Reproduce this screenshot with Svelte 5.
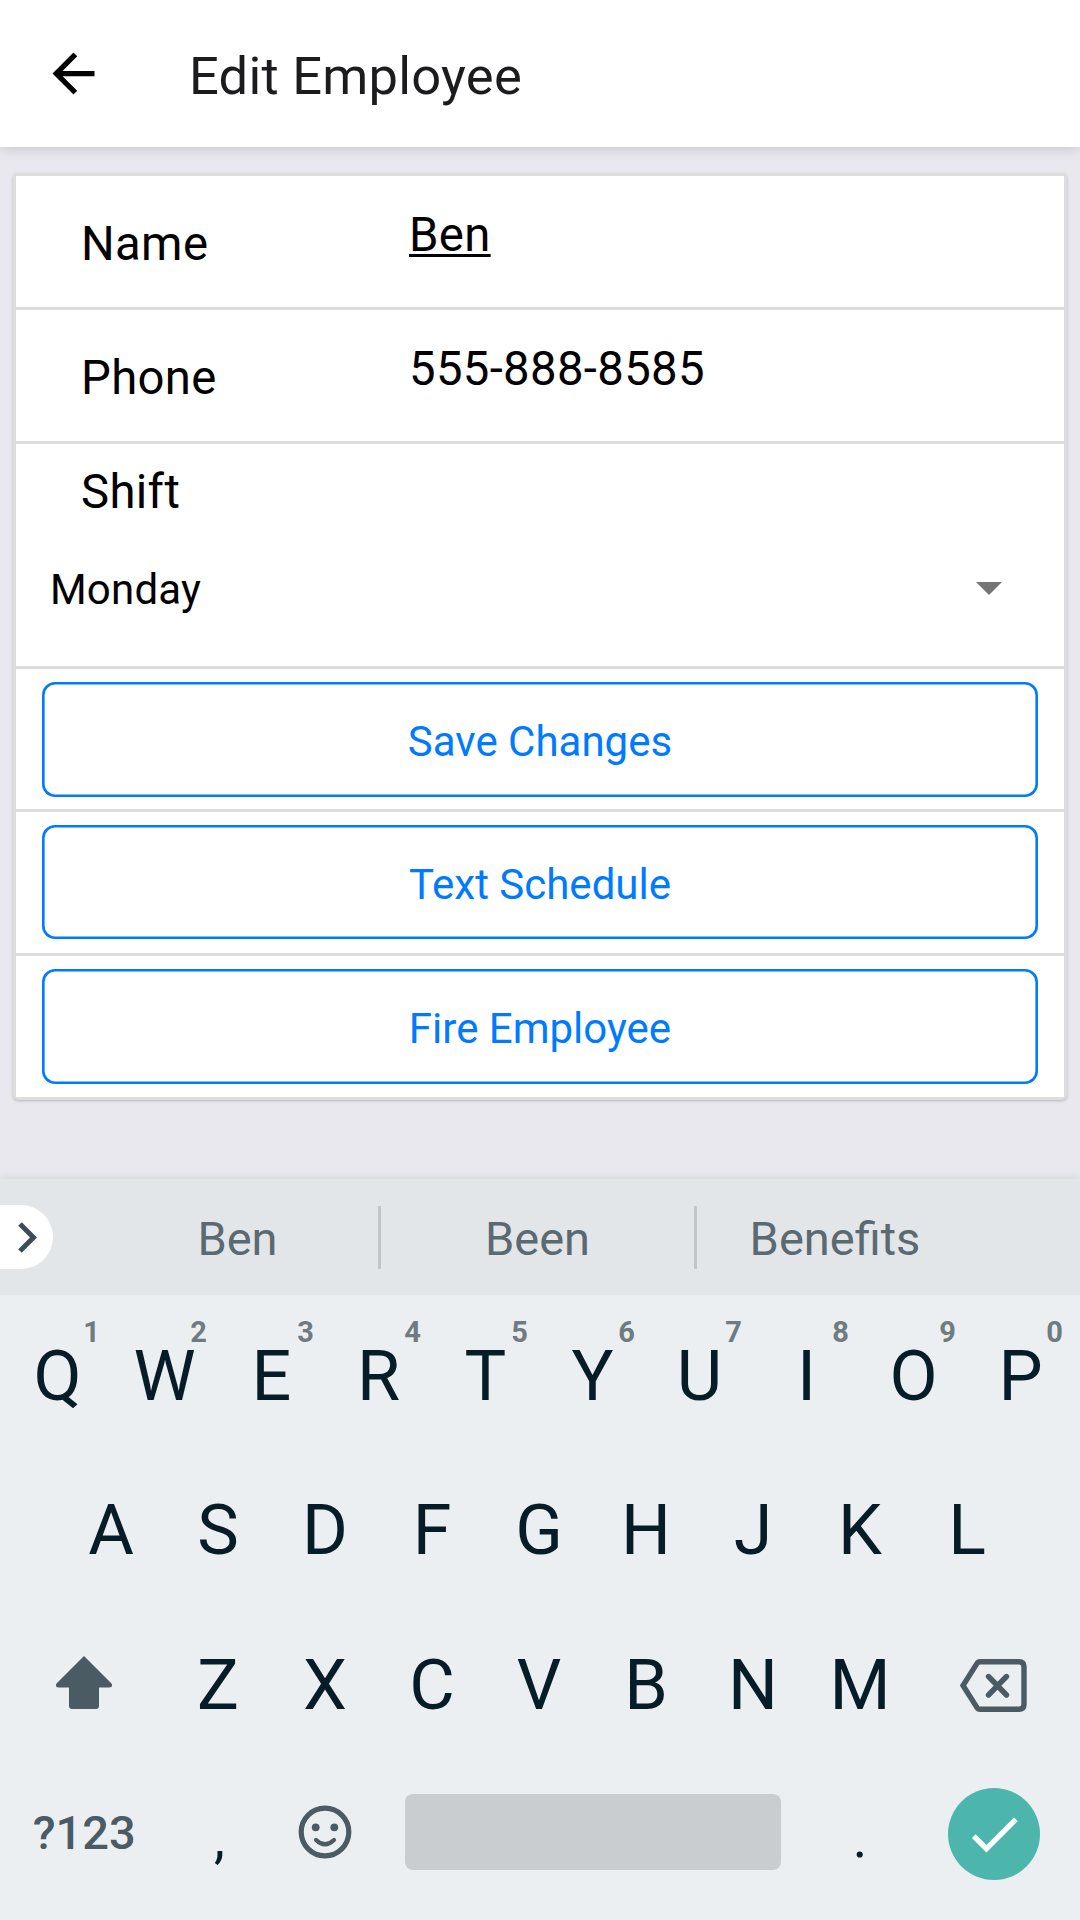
<script>
  const fields = [
    { label: 'Name', value: 'Ben', composing: true },
    { label: 'Phone', value: '555-888-8585', composing: false }
  ];
  const actions = ['Save Changes', 'Text Schedule', 'Fire Employee'];
  const suggestions = ['Ben', 'Been', 'Benefits'];
  const topRow = [...'QWERTYUIOP'].map((letter, i) => ({ letter, hint: (i + 1) % 10 }));
  const middleRow = [...'ASDFGHJKL'];
  const bottomRow = [...'ZXCVBNM'];
</script>

<div class="screen">
  <header>
    <svg class="back" viewBox="0 0 24 24"><path d="M20 11H7.83l5.59-5.59L12 4l-8 8 8 8 1.41-1.41L7.83 13H20z" /></svg>
    <h1>Edit Employee</h1>
  </header>

  <main>
    <section class="card">
      {#each fields as field}
        <div class="field">
          <span class="label">{field.label}</span>
          <span class="value"><span class:composing={field.composing}>{field.value}</span></span>
        </div>
      {/each}
      <div class="shift">
        <div class="label">Shift</div>
        <div class="picker">
          <span>Monday</span>
          <svg class="caret" viewBox="0 0 26 13"><path d="M0 0h26L13 13z" /></svg>
        </div>
      </div>
      {#each actions as action}
        <div class="action"><button>{action}</button></div>
      {/each}
    </section>
  </main>

  <div class="keyboard">
    <div class="strip">
      <div class="expand">
        <svg viewBox="0 0 19 31"><path d="M2 2l13.5 13.5L2 29" /></svg>
      </div>
      <div class="suggestions">
        {#each suggestions as word}
          <span class="word">{word}</span>
        {/each}
      </div>
    </div>

    <div class="row">
      {#each topRow as key}
        <div class="key hinted"><span class="hint">{key.hint}</span><span class="cap">{key.letter}</span></div>
      {/each}
    </div>
    <div class="row">
      {#each middleRow as letter}
        <div class="key">{letter}</div>
      {/each}
    </div>
    <div class="row">
      <div class="wide">
        <svg class="shift-icon" viewBox="0 0 56 53"><path d="M28 0 55 27c2 2 1 4.500-1.500 4.500H43V50c0 2-1 3-3 3H16c-2 0-3-1-3-3V31.500H2.500C0 31.500-1 29 1 27z" /></svg>
      </div>
      {#each bottomRow as letter}
        <div class="key">{letter}</div>
      {/each}
      <div class="wide">
        <svg class="backspace" viewBox="0 0 67 53">
          <path d="M20 2.700H59q5 0 5 5V45.300q0 5-5 5H20q-2 0-3-1.700L3 26.500 17 4.400q1-1.700 3-1.700z" />
          <path class="cross" d="M28.500 17.500 46.500 36M46.500 17.500 28.500 36" />
        </svg>
      </div>
    </div>
    <div class="row last">
      <div class="wide symbols">?123</div>
      <div class="key punct comma">,</div>
      <div class="key">
        <svg class="emoji" viewBox="0 0 54 54">
          <circle class="face" cx="27" cy="27" r="23.800" />
          <circle cx="17.700" cy="22.300" r="3.900" />
          <circle cx="36.300" cy="22.300" r="3.900" />
          <path d="M18 35q9 8.500 18 0" />
        </svg>
      </div>
      <div class="space"></div>
      <div class="key punct">.</div>
      <div class="wide">
        <div class="enter">
          <svg viewBox="0 0 24 24"><path d="M9 16.170 4.830 12l-1.420 1.410L9 19 21 7l-1.410-1.410z" /></svg>
        </div>
      </div>
    </div>
  </div>
</div>

<style>
  :global(body) {
    margin: 0;
  }
  .screen {
    width: 1080px;
    height: 1920px;
    display: flex;
    flex-direction: column;
    overflow: hidden;
    background: #e9e8ee;
    color: #000;
    font-family: Roboto, sans-serif;
  }
  svg {
    display: block;
    flex: none;
  }

  header {
    flex: none;
    height: 147px;
    box-sizing: border-box;
    padding-left: 42px;
    display: flex;
    align-items: center;
    background: #fff;
    box-shadow: 0 1px 12px rgba(0, 0, 0, 0.17);
  }
  .back {
    width: 63px;
    height: 63px;
  }
  h1 {
    margin: 0;
    padding: 4px 0 0 84px;
    font-size: 52.5px;
    font-weight: 400;
    line-height: 62px;
    letter-spacing: 0.25px;
    color: #1c1c1e;
  }

  main {
    flex: 1;
    padding: 26px 13px 0;
  }
  .card {
    border: 3px solid #ddd;
    border-radius: 5px;
    background: #ddd;
    box-shadow: 0 1px 3px rgba(0, 0, 0, 0.22);
    display: grid;
    grid-template-rows: 131px 131px 222px 140px 141px 141px;
    gap: 3px;
  }
  .card > div {
    background: #fff;
  }
  .label,
  .value {
    font-size: 47.25px;
    line-height: 56px;
    letter-spacing: 0.35px;
  }
  .label {
    padding-left: 65px;
  }
  .field {
    display: flex;
    align-items: center;
  }
  .field .label {
    width: 328px;
    padding-top: 5px;
  }
  .value {
    padding-bottom: 13px;
  }
  .composing {
    text-decoration: underline;
    text-decoration-thickness: 2.5px;
    text-underline-offset: 3px;
  }
  .shift {
    padding-top: 20px;
  }
  .picker {
    margin-top: 42px;
    padding: 0 62.5px 0 34px;
    display: flex;
    justify-content: space-between;
    font-size: 42px;
    line-height: 56px;
    letter-spacing: 0.2px;
  }
  .caret {
    width: 26px;
    height: 13px;
    align-self: center;
    margin-top: -4px;
    fill: #757575;
  }
  .action {
    padding: 13px 26px 12px;
    display: flex;
  }
  .action:nth-child(5) {
    padding-bottom: 14px;
  }
  .action:nth-child(6) {
    padding-bottom: 13px;
  }
  button {
    flex: 1;
    border: 0;
    border-radius: 13px;
    padding: 4px 0 0;
    background: #fff;
    box-shadow: inset 0 0 0 2.6px #007aff;
    color: #007aff;
    font: 400 42px Roboto, sans-serif;
  }

  .keyboard {
    flex: none;
    height: 741px;
    background: #ebeff2;
    color: #061d27;
    box-shadow: 0 0 9px rgba(0, 0, 0, 0.12);
  }
  .strip {
    height: 116px;
    margin-bottom: 4px;
    display: flex;
    align-items: center;
    background: #e2e6e9;
  }
  .expand {
    width: 52.5px;
    height: 64px;
    border-radius: 0 32px 32px 0;
    background: #fff;
    display: flex;
    align-items: center;
  }
  .expand svg {
    width: 19px;
    height: 31px;
    margin-left: 18px;
    fill: none;
    stroke: #3c4d57;
    stroke-width: 5;
  }
  .suggestions {
    margin-left: 44.5px;
    display: grid;
    grid-template-columns: 284px 316px 276px;
    grid-template-rows: 63px;
    font-size: 47px;
    line-height: 65px;
    text-align: center;
    color: #5b6970;
  }
  .word:not(:last-child) {
    border-right: 3px solid #c1c6c9;
  }

  .row {
    height: 154.5px;
    box-sizing: border-box;
    padding-right: 2px;
    display: flex;
    justify-content: center;
    align-items: center;
  }
  .key,
  .wide {
    display: flex;
    justify-content: center;
    align-items: center;
  }
  .key {
    width: 107px;
    font-size: 70px;
    line-height: 82px;
  }
  .wide {
    width: 160.5px;
  }
  .row:nth-child(3) .key {
    padding-bottom: 2px;
  }
  .hinted {
    flex-direction: column;
    height: 154.5px;
    justify-content: flex-start;
  }
  .hint {
    align-self: flex-end;
    margin: 15px 11px 0 0;
    font-size: 29px;
    font-weight: 700;
    line-height: 36px;
    color: #6f7b81;
  }
  .cap {
    height: 56px;
    line-height: 52px;
  }
  .shift-icon {
    width: 56px;
    height: 53px;
    margin-bottom: 6px;
    fill: #4b5b64;
  }
  .backspace {
    width: 67px;
    height: 53px;
    fill: none;
    stroke: #4b5b64;
    stroke-width: 5.4;
  }
  .cross {
    stroke-linecap: round;
  }
  .row.last {
    height: 139.5px;
  }
  .symbols {
    font-size: 47px;
    font-weight: 500;
    color: #4b5b64;
  }
  .punct {
    padding-top: 12px;
    font-size: 55px;
    line-height: 64px;
  }
  .comma {
    box-sizing: border-box;
    padding-left: 3px;
  }
  .emoji {
    width: 54px;
    height: 54px;
    fill: #4b5b64;
  }
  .emoji .face,
  .emoji path {
    fill: none;
    stroke: #4b5b64;
    stroke-width: 5.2;
  }
  .emoji path {
    stroke-width: 4.2;
    stroke-linecap: round;
  }
  .space {
    width: 376px;
    height: 76px;
    margin: 0 26px;
    border-radius: 8px;
    background: #c9cdd0;
  }
  .enter {
    width: 92px;
    height: 92px;
    margin-top: 4px;
    border-radius: 50%;
    background: #4db6ac;
    display: flex;
    align-items: center;
    justify-content: center;
  }
  .enter svg {
    width: 62.5px;
    height: 62.5px;
    fill: #fff;
  }
</style>
